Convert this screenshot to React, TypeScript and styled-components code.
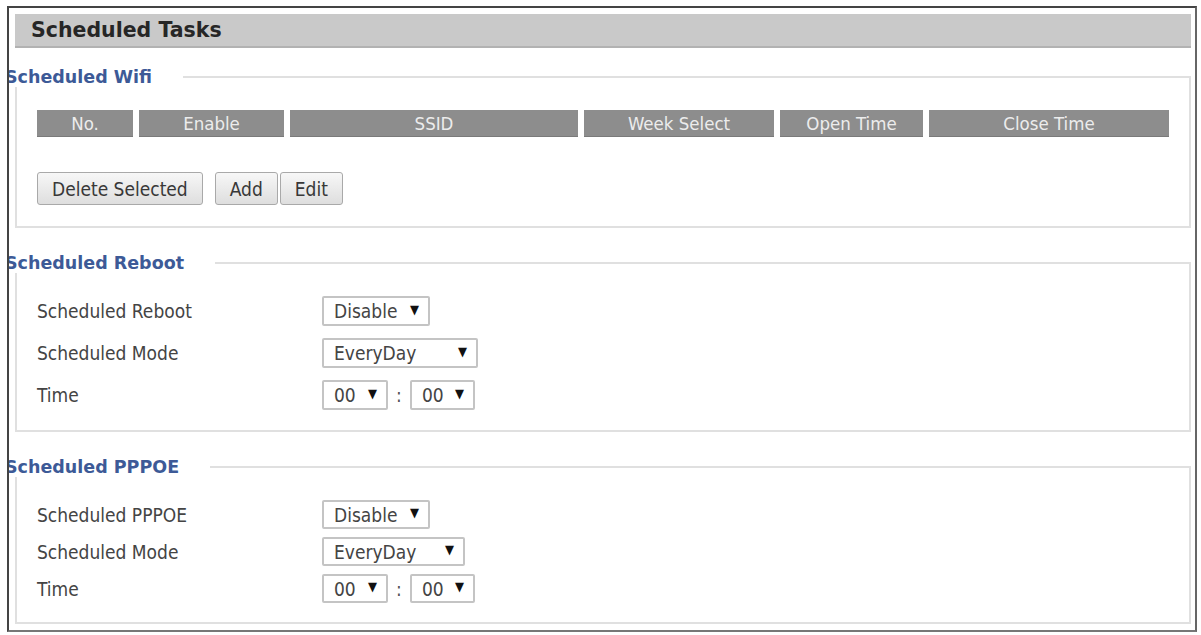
import React from "react"
import styled, { createGlobalStyle } from "styled-components"

const GlobalStyle = createGlobalStyle`
  html, body {
    margin: 0;
    padding: 0;
    background: #ffffff;
  }
  body {
    font-family: "DejaVu Sans Condensed", "DejaVu Sans", sans-serif;
    font-stretch: condensed;
    color: #444;
  }
`

const Frame = styled.div`
  box-sizing: border-box;
  width: 1190px;
  margin: 6px 0 0 7px;
  padding: 6px 4px 6px 6px;
  border: 2px solid #444;
  border-bottom-color: #777;
  border-right-color: #666;
  overflow: hidden;
`

const PageHeader = styled.div`
  box-sizing: border-box;
  height: 34px;
  display: flex;
  align-items: center;
  padding-left: 16px;
  background: #c9c9c9;
  border-bottom: 2px solid #b2b2b2;
  font-family: "DejaVu Sans", sans-serif;
  font-stretch: normal;
  font-weight: 700;
  font-size: 20.5px;
  color: #262626;
`

const Group = styled.fieldset<{ $gap: number }>`
  margin: ${({ $gap }) => $gap}px 0 0 0;
  padding: 0;
  border: 2px solid #e0e0e0;
  min-width: 0;
`

const Legend = styled.legend`
  margin-left: -12px;
  padding: 0 31px 0 0;
  line-height: 20px;
  font-family: "DejaVu Sans", sans-serif;
  font-stretch: normal;
  font-weight: 700;
  font-size: 17.5px;
  color: #3d5a97;
`

const GroupBody = styled.div<{ $bottom: number }>`
  padding: 23px 20px ${({ $bottom }) => $bottom}px 20px;
`

const HeadRow = styled.div`
  display: grid;
  grid-template-columns: 96px 145px 288px 190px 143px 1fr;
  gap: 6px;
`

const HeadCell = styled.div`
  box-sizing: border-box;
  height: 27px;
  display: flex;
  align-items: center;
  justify-content: center;
  background: #8d8d8d;
  border-bottom: 1px solid #7a7a7a;
  color: #ececec;
  font-size: 18.5px;
`

const ButtonBar = styled.div`
  display: flex;
  margin-top: 35px;
`

const Button = styled.button<{ $space?: number }>`
  box-sizing: border-box;
  height: 33px;
  padding: 0 14px;
  margin-right: ${({ $space }) => $space ?? 0}px;
  border: 1px solid #a9a9a9;
  border-radius: 3px;
  background: linear-gradient(#f7f7f7, #dedede);
  font-family: "DejaVu Sans Condensed", "DejaVu Sans", sans-serif;
  font-stretch: condensed;
  font-size: 19px;
  color: #383838;
`

const Rows = styled.div<{ $gap: number }>`
  display: flex;
  flex-direction: column;
  gap: ${({ $gap }) => $gap}px;
`

const Row = styled.div`
  display: flex;
  align-items: center;
`

const Label = styled.div`
  width: 285px;
  font-size: 19px;
  color: #444;
`

const Controls = styled.div`
  display: flex;
  align-items: center;
`

const SelectBox = styled.div<{ $w: number; $h: number }>`
  box-sizing: border-box;
  width: ${({ $w }) => $w}px;
  height: ${({ $h }) => $h}px;
  display: flex;
  align-items: center;
  justify-content: space-between;
  padding: 0 9px 0 10px;
  border: 2px solid #c4c4c4;
  border-radius: 2px;
  background: #fff;
  font-size: 19px;
  color: #444;
`

const Arrow = styled.span`
  font-family: "DejaVu Sans", sans-serif;
  font-size: 13px;
  color: #111;
  padding-bottom: 4px;
`

const Colon = styled.span`
  width: 22px;
  text-align: center;
  font-size: 19px;
  color: #555;
`

const Select = ({ value, w, h }: { value: string; w: number; h: number }) => (
  <SelectBox $w={w} $h={h}>
    <span>{value}</span>
    <Arrow>▼</Arrow>
  </SelectBox>
)

const columns = ["No.", "Enable", "SSID", "Week Select", "Open Time", "Close Time"]

interface ScheduleProps {
  title: string
  first: string
  gap: number
  h: number
  modeWidth: number
  top: number
  bottom: number
}

function ScheduleGroup({ title, first, gap, h, modeWidth, top, bottom }: ScheduleProps) {
  return (
    <Group $gap={top}>
      <Legend>{title}</Legend>
      <GroupBody $bottom={bottom}>
        <Rows $gap={gap}>
          <Row>
            <Label>{first}</Label>
            <Select value="Disable" w={108} h={h} />
          </Row>
          <Row>
            <Label>Scheduled Mode</Label>
            <Select value="EveryDay" w={modeWidth} h={h} />
          </Row>
          <Row>
            <Label>Time</Label>
            <Controls>
              <Select value="00" w={66} h={h} />
              <Colon>:</Colon>
              <Select value="00" w={65} h={h} />
            </Controls>
          </Row>
        </Rows>
      </GroupBody>
    </Group>
  )
}

export default function App() {
  return (
    <>
      <GlobalStyle />
      <Frame>
        <PageHeader>Scheduled Tasks</PageHeader>

        <Group $gap={19}>
          <Legend>Scheduled Wifi</Legend>
          <GroupBody $bottom={21}>
            <HeadRow>
              {columns.map((c) => (
                <HeadCell key={c}>{c}</HeadCell>
              ))}
            </HeadRow>
            <ButtonBar>
              <Button $space={12}>Delete Selected</Button>
              <Button $space={2}>Add</Button>
              <Button>Edit</Button>
            </ButtonBar>
          </GroupBody>
        </Group>

        <ScheduleGroup
          title="Scheduled Reboot"
          first="Scheduled Reboot"
          gap={12}
          h={30}
          modeWidth={156}
          top={25}
          bottom={20}
        />

        <ScheduleGroup
          title="Scheduled PPPOE"
          first="Scheduled PPPOE"
          gap={8}
          h={29}
          modeWidth={143}
          top={25}
          bottom={19}
        />
      </Frame>
    </>
  )
}
